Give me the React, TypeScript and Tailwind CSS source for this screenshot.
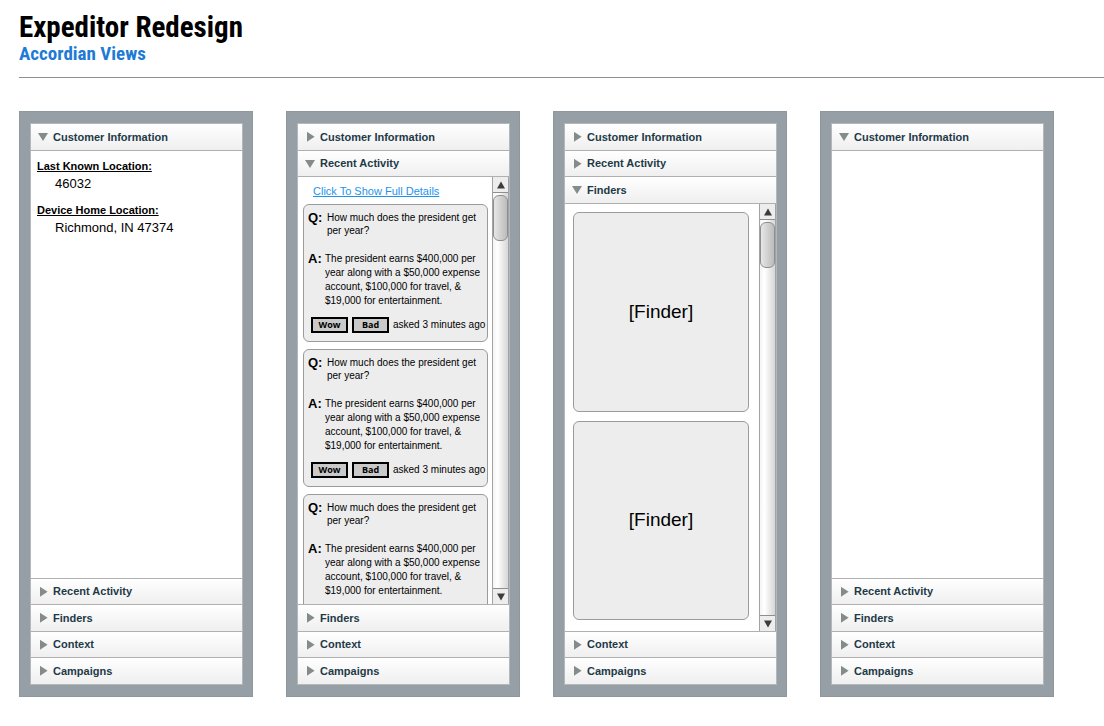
import { useState, type ReactNode } from "react";
import clsx from "clsx";

type SectionName =
  | "Customer Information"
  | "Recent Activity"
  | "Finders"
  | "Context"
  | "Campaigns";

const sections: { name: SectionName; height: string }[] = [
  { name: "Customer Information", height: "h-[26px]" },
  { name: "Recent Activity", height: "h-[26px] border-t" },
  { name: "Finders", height: "h-[27px] border-t" },
  { name: "Context", height: "h-[26px] border-t" },
  { name: "Campaigns", height: "h-[27px] border-t" },
];

function Disclosure({ open }: { open: boolean }) {
  return (
    <svg viewBox="0 0 10 10" className="h-2.5 w-2.5 shrink-0 fill-[#848b8b]" aria-hidden="true">
      <path d={open ? "M0 1H10L5 9Z" : "M2 -0.2L9.6 4.8L2 9.8Z"} />
    </svg>
  );
}

function Scrollbar() {
  return (
    <div className="flex w-[17px] shrink-0 flex-col border-x border-[#a3a3a3] bg-linear-to-r from-[#f4f4f4] via-white via-30% to-[#d6d6d6]">
      <button
        type="button"
        aria-label="Scroll up"
        className="flex h-4 shrink-0 items-center justify-center border-b border-[#8f8f8f] bg-[#ededed]"
      >
        <svg viewBox="0 0 8 8" className="h-2 w-2 fill-[#3c3c3c]" aria-hidden="true">
          <path d="M4 0.5L8 7.5H0Z" />
        </svg>
      </button>
      <div className="mt-0.5 h-[46px] shrink-0 rounded-[6px] border border-[#8e8e8e] bg-linear-to-r from-[#e6e6e6] to-[#bcbcbc]" />
      <div className="flex-1" />
      <button
        type="button"
        aria-label="Scroll down"
        className="flex h-4 shrink-0 items-center justify-center border-t border-[#8f8f8f] bg-[#ededed]"
      >
        <svg viewBox="0 0 8 8" className="h-2 w-2 fill-[#3c3c3c]" aria-hidden="true">
          <path d="M4 7.5L8 0.5H0Z" />
        </svg>
      </button>
    </div>
  );
}

function ScrollPane({ children }: { children: ReactNode }) {
  return (
    <div className="flex h-full">
      <div className="min-w-0 flex-1 overflow-hidden">{children}</div>
      <Scrollbar />
    </div>
  );
}

function CustomerInformation() {
  return (
    <dl className="px-1.5 pt-[7px] text-black">
      <dt className="text-[11px] leading-4 font-bold underline">Last Known Location:</dt>
      <dd className="mt-px pl-[18px] text-[13px] leading-[18px]">46032</dd>
      <dt className="mt-[9px] text-[11px] leading-4 font-bold underline">Device Home Location:</dt>
      <dd className="mt-px pl-[18px] text-[13px] leading-[18px]">Richmond, IN 47374</dd>
    </dl>
  );
}

function RatingButton({ children }: { children: ReactNode }) {
  return (
    <button
      type="button"
      className="flex h-4 w-[37px] shrink-0 items-center justify-center border-2 border-black bg-[#c9c9c9] font-['Open_Sans','Noto_Sans',sans-serif] text-[9px] leading-3 font-bold"
    >
      {children}
    </button>
  );
}

function ActivityCard({ rateable = true }: { rateable?: boolean }) {
  return (
    <article className="min-h-[138px] rounded-[6px] border border-[#9b9b9b] bg-[#ededed] pt-1.5 pb-2 pl-1 text-[10px] text-black">
      <div className="flex">
        <span className="w-[19px] shrink-0 text-[13px] leading-[13px] font-bold">Q:</span>
        <p className="leading-[13px]">How much does the president get per year?</p>
      </div>
      <div className="mt-[15px] flex">
        <span className="w-[17px] shrink-0 text-[13px] leading-[13px] font-bold">A:</span>
        <p className="leading-[14px]">
          The president earns $400,000 per year along with a $50,000 expense account, $100,000 for
          travel, &amp; $19,000 for entertainment.
        </p>
      </div>
      {rateable && (
        <div className="mt-[9px] flex items-center gap-1 pl-[3px]">
          <RatingButton>Wow</RatingButton>
          <RatingButton>Bad</RatingButton>
          <span className="leading-4 whitespace-nowrap">asked 3 minutes ago</span>
        </div>
      )}
    </article>
  );
}

function RecentActivity() {
  return (
    <ScrollPane>
      <div className="pt-1.5 pr-1 pl-[5px]">
        <a href="#details" className="ml-2.5 block text-[11px] leading-4 text-[#1b94f0] underline">
          Click To Show Full Details
        </a>
        <div className="mt-[5px] flex flex-col gap-[7px]">
          <ActivityCard />
          <ActivityCard />
          <ActivityCard rateable={false} />
        </div>
      </div>
    </ScrollPane>
  );
}

function Finders() {
  return (
    <ScrollPane>
      <div className="flex h-full flex-col gap-[9px] pt-2 pr-2.5 pb-[11px] pl-2">
        {[0, 1].map((n) => (
          <div
            key={n}
            className="flex flex-1 items-center justify-center rounded-[6px] border border-[#9b9b9b] bg-[#ededed] text-[19px] text-black"
          >
            [Finder]
          </div>
        ))}
      </div>
    </ScrollPane>
  );
}

function Accordion({ initial, blank = false }: { initial: SectionName; blank?: boolean }) {
  const [current, setCurrent] = useState<SectionName>(initial);

  const content: Partial<Record<SectionName, ReactNode>> = blank
    ? {}
    : {
        "Customer Information": <CustomerInformation />,
        "Recent Activity": <RecentActivity />,
        Finders: <Finders />,
      };

  return (
    <section className="flex min-h-0 flex-col border border-[#8e979c] bg-[#959fa5] py-[11px] pr-[9px] pl-2.5">
      <div className="flex min-h-0 flex-1 flex-col border border-[#b3b8ba] bg-white">
        {sections.map(({ name, height }) => {
          const open = name === current;
          return (
            <div key={name} className={clsx("flex flex-col", open ? "min-h-0 flex-1" : "shrink-0")}>
              <button
                type="button"
                aria-expanded={open}
                onClick={() => setCurrent(name)}
                className={clsx(
                  "flex shrink-0 items-center gap-[5px] border-[#b0b0b0] bg-linear-to-b from-white to-[#efefef] pl-[7px] text-left text-[11px] font-bold text-[#1e3a47]",
                  height,
                )}
              >
                <Disclosure open={open} />
                {name}
              </button>
              {open && (
                <div className="min-h-0 flex-1 overflow-hidden border-t border-[#b0b0b0]">
                  {content[name]}
                </div>
              )}
            </div>
          );
        })}
      </div>
    </section>
  );
}

export default function App() {
  return (
    <div className="flex h-screen min-h-[480px] flex-col bg-white pb-[29px] pl-[19px] font-['Liberation_Sans',Arial,sans-serif]">
      <header className="border-b border-[#8f8f8f] pt-[11px] pb-3 font-['Roboto_Condensed','Open_Sans_Condensed','Noto_Sans_Condensed',Roboto,sans-serif] font-bold">
        <h1 className="text-[29px] leading-8 text-black">Expeditor Redesign</h1>
        <p className="text-[19px] leading-[22px] text-[#1d7ad6]">Accordian Views</p>
      </header>
      <main className="mt-[33px] mr-[50px] grid min-h-0 flex-1 grid-cols-4 grid-rows-1 gap-[33px]">
        <Accordion initial="Customer Information" />
        <Accordion initial="Recent Activity" />
        <Accordion initial="Finders" />
        <Accordion initial="Customer Information" blank />
      </main>
    </div>
  );
}
